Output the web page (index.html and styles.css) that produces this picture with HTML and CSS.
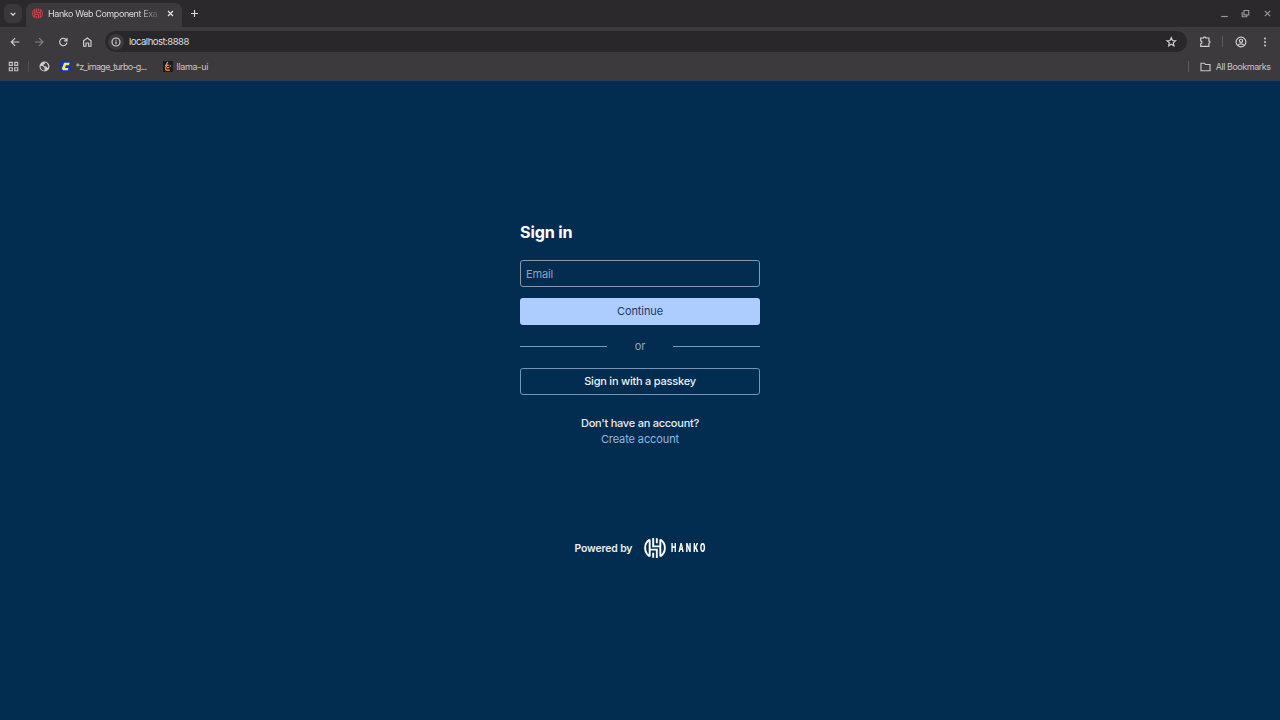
FILE: index.html
```html
<!DOCTYPE html>
<html lang="en">
<head>
<meta charset="utf-8">
<title>Hanko Web Component Example</title>
<link rel="stylesheet" href="styles.css">
</head>
<body>
<svg class="defs" width="0" height="0">
  <symbol id="hanko" viewBox="0 0 24 24">
    <g fill="none" stroke="currentColor" stroke-width="2.1">
      <path d="M6.2 2.8A11 11 0 0 0 6.2 21.2M17.8 2.8A11 11 0 0 1 17.8 21.2M6.2 2.8v18.4M17.8 2.8v18.4M10 1v9.2h7.8M14 23v-9.2H6.2M14 1.4v5.4M10 22.6v-5.4"/>
    </g>
  </symbol>
</svg>
<header class="browser">
  <div class="tabstrip">
    <button class="tab-search"><svg width="8" height="8" viewBox="0 0 8 8"><path d="M1.7 2.8 4 5.1l2.3-2.3"/></svg></button>
    <div class="tab">
      <svg class="favicon" width="11" height="11"><use href="#hanko"/></svg>
      <span class="tab-title">Hanko Web Component Exa</span>
      <svg class="close" width="7" height="7" viewBox="0 0 7 7"><path d="m1 1 5 5M6 1 1 6"/></svg>
    </div>
    <svg class="new-tab" width="9" height="9" viewBox="0 0 9 9"><path d="M4.5 1v7M1 4.5h7"/></svg>
    <div class="window-buttons">
      <svg width="9" height="9" viewBox="0 0 9 9"><path d="M1.2 7.5h6.6"/></svg>
      <svg width="9" height="9" viewBox="0 0 9 9"><path d="M3 1.5h4.7v4.3H3zM1.2 3v4.7h4.5V5.8"/></svg>
      <svg width="9" height="9" viewBox="0 0 9 9"><path d="m1.8 1.8 5.4 5.4M7.2 1.8 1.8 7.2"/></svg>
    </div>
  </div>
  <div class="toolbar">
    <nav class="nav">
      <svg width="12" height="12" viewBox="0 0 12 12"><path d="M10.3 6H2.5M6.1 2.2 2.3 6l3.8 3.8"/></svg>
      <svg class="off" width="12" height="12" viewBox="0 0 12 12"><path d="M2 6h7.8M6.2 2.2 10 6 6.2 9.8"/></svg>
      <svg width="12" height="12" viewBox="0 0 12 12"><path d="M9.6 4.2A3.7 3.7 0 1 0 10 6.7M10 2v2.8H7.1"/></svg>
      <svg width="12" height="12" viewBox="0 0 12 12"><path d="M2.6 10.2V4.8L6.3 2 10 4.8v5.4H7.6V7H5v3.2z"/></svg>
    </nav>
    <div class="omnibox">
      <span class="site-info"><svg width="10" height="10" viewBox="0 0 10 10"><circle cx="5" cy="5" r="4"/><path d="M5 4.5v2.8M5 2.7v1"/></svg></span>
      <span class="url">localhost:8888</span>
      <svg class="star" width="12" height="12" viewBox="0 0 12 12"><path d="m6.3 1.7 1.25 2.8 3.05.3-2.3 2 .7 3-2.7-1.55L3.6 9.8l.7-3L2 4.8l3.05-.3z"/></svg>
    </div>
    <div class="actions">
      <svg width="12" height="12" viewBox="0 0 12 12"><path d="M1.7 2h2.8c0-1.2 2.4-1.2 2.4 0h3v2.9c1.5 0 1.5 2.3 0 2.3v3.1H1.7V7.8c1.7 0 1.7-3 0-3z"/></svg>
      <i class="rule"></i>
      <svg width="12" height="12" viewBox="0 0 12 12"><circle cx="6" cy="6" r="4.9"/><circle cx="6" cy="4.8" r="1.6"/><path d="M2.8 9.3c1.6-1.9 4.8-1.9 6.4 0"/></svg>
      <svg class="dots" width="12" height="12" viewBox="0 0 12 12"><circle cx="6" cy="2.5" r="1"/><circle cx="6" cy="6" r="1"/><circle cx="6" cy="9.5" r="1"/></svg>
    </div>
  </div>
  <div class="bookmarks">
    <svg class="apps" width="11" height="11" viewBox="0 0 11 11"><path d="M1.3 1.3h3v3h-3zM6.7 1.3h3v3h-3zM1.3 6.7h3v3h-3zM6.7 6.7h3v3h-3z"/></svg>
    <i class="rule faint"></i>
    <svg class="globe" width="11" height="11" viewBox="0 0 11 11"><circle cx="5.5" cy="5.5" r="5" fill="#d0ced1"/><path fill="#454247" d="M1.5 5h2.1l1.9 1.8v2.9C3 9.4 1.5 7.5 1.5 5zM5.5 1.5l2.2.4L9.4 5 8.6 7 7 5.4 4.8 5 4.4 3.8 6 3z"/></svg>
    <svg class="comfy" width="11" height="11" viewBox="0 0 11 12"><path fill="#1430dc" d="M0 0h11v12H0z"/><path fill="#eff34e" d="M4 2h6l-.7 2.5H5.8L5 7.5h3.7L8 10H2.8L1.5 8.5z"/></svg>
    <span class="bm-a">*z_image_turbo-g...</span>
    <svg class="llama" width="10" height="11" viewBox="0 0 10 11"><path fill="#1d1b1c" d="M0 0h10v11H0z"/><path class="llama-line" d="M4.7 1 3 4.2h2.7M3.5 4.2 2.7 7c-.4 1.7.5 2.2 1.6 2.2h2.4M4 6.6h2.3M7.4 4.2v1.4"/></svg>
    <span class="bm-b">llama-ui</span>
    <i class="rule last"></i>
    <svg class="folder" width="11" height="10" viewBox="0 0 11 10"><path d="M1 1.2h3.3l1.2 1.3H10v6.2H1z"/></svg>
    <span class="bm-all">All Bookmarks</span>
  </div>
</header>
<main class="page">
  <form class="card">
    <h1>Sign in</h1>
    <input class="field" type="email" placeholder="Email">
    <button class="button primary" type="button">Continue</button>
    <div class="divider"><span>or</span></div>
    <button class="button secondary" type="button">Sign in with a passkey</button>
    <p class="question">Don't have an account?</p>
    <a class="create">Create account</a>
  </form>
  <footer class="powered">
    <span class="powered-text">Powered by</span>
    <svg class="mark" width="22" height="22"><use href="#hanko"/></svg>
    <span class="wordmark">HANKO</span>
  </footer>
</main>
</body>
</html>
```
FILE: styles.css
```css
* { box-sizing: border-box; }
body { margin: 0; height: 720px; overflow: hidden; background: #022d51; font-family: Inter, sans-serif; }
button, input { font: inherit; padding: 0; margin: 0; border: 0; }
svg { display: block; flex: none; }
.defs { position: absolute; }
.browser { height: 81px; background: #3c3a3d; color: #d2d0d3; font-size: 9px; border-bottom: 1px solid #243d52; white-space: nowrap; }
.browser svg { fill: none; stroke: currentColor; stroke-width: 1.15; }
.tabstrip { height: 27px; display: flex; align-items: center; background: #2b292c; padding-left: 4px; }
.tab-search { width: 18px; height: 19px; border-radius: 6px; background: #3a383b; color: #e4e2e5; display: grid; place-items: center; }
.tab { align-self: flex-end; width: 156px; height: 24px; margin-left: 4px; padding: 0 8px 3px 6px; border-radius: 7px 7px 0 0; background: #3c3a3d; display: flex; align-items: center; }
.browser .favicon { color: #e0454d; stroke: none; }
.tab-title { width: 112px; flex: none; margin-left: 5px; color: #dddbde; letter-spacing: -.42px; mask-image: linear-gradient(90deg, #000 80%, transparent 102%); }
.close { margin-left: 7px; color: #e4e2e5; }
.new-tab { margin-left: 8px; color: #d8d6d9; }
.window-buttons { margin-left: auto; padding-right: 8px; display: flex; gap: 12.7px; color: #99979a; }
.toolbar { height: 29px; display: flex; align-items: center; padding-left: 9px; }
.nav { display: flex; gap: 12px; }
.off { color: #858386; }
.omnibox { width: 1082px; height: 21px; margin-left: 12px; padding: 0 10px 0 3px; border-radius: 11px; background: #29272a; display: flex; align-items: center; }
.site-info { width: 16px; height: 16px; border-radius: 50%; background: #3b393c; display: grid; place-items: center; }
.url { margin-left: 5px; font-size: 9.5px; letter-spacing: -.5px; line-height: 14px; color: #dfdde0; }
.star { margin-left: auto; }
.actions { display: flex; align-items: center; margin-left: 12px; }
.rule { width: 1px; height: 11px; background: #5d5b5e; }
.actions .rule { margin: 0 12px 0 11px; }
.browser .dots { margin-left: 12px; fill: currentColor; stroke: none; }
.bookmarks { height: 24px; display: flex; align-items: center; padding: 0 9.5px 3px 8px; font-size: 9px; line-height: 11px; color: #c7c5c8; }
.faint { margin-left: 9px; opacity: .6; }
.browser .globe { margin-left: 9.5px; stroke: none; }
.browser .comfy { margin-left: 10px; stroke: none; }
.bm-a { width: 73px; flex: none; margin-left: 5px; letter-spacing: -.69px; }
.browser .llama { margin-left: 14px; stroke: none; }
.browser .llama-line { stroke: #f48436; stroke-width: 1.4; }
.bm-b { margin-left: 4px; letter-spacing: -.3px; }
.last { margin-left: auto; }
.folder { margin: 0 5px 0 11px; }
.bm-all { letter-spacing: -.48px; }
.page { display: flex; flex-direction: column; align-items: center; padding-top: 142px; }
.card { width: 240px; display: flex; flex-direction: column; font-size: 11px; line-height: 15px; letter-spacing: -.1px; }
h1 { margin: 0 0 20px; font-size: 16.2px; line-height: 18px; font-weight: 700; letter-spacing: -.18px; color: #fff; }
.field { height: 27px; margin-top: -.6px; padding: 1px 5px 0; border: 1px solid #8799ad; border-radius: 3px; background: transparent; letter-spacing: -.15px; }
.field::placeholder { color: #8ea4bd; opacity: 1; }
.button { height: 27px; border-radius: 3px; }
.primary { margin-top: 10.6px; background: #aecdff; color: #163b68; letter-spacing: -.1px; }
.divider { height: 15px; margin: 14px 0; display: flex; align-items: center; justify-content: center; color: #91a7bf; }
.divider::before, .divider::after { content: ""; flex: 1; height: 1px; background: #7f9ab2; }
.divider span { width: 66px; text-align: center; }
.secondary { border: 1px solid #7896b4; background: transparent; color: #edf1f5; font-weight: 500; letter-spacing: -.22px; }
.question { margin: 21px 0 1px; text-align: center; font-weight: 500; letter-spacing: -.25px; color: #e7edf2; }
.create { text-align: center; color: #90b7e6; }
.powered { width: 131px; height: 22px; margin-top: 90px; display: flex; align-items: center; color: #fff; }
.powered-text { width: 69px; font-size: 10.4px; font-weight: 600; letter-spacing: -.12px; color: #e9eef4; white-space: nowrap; }
.wordmark { width: 35px; margin-left: 5px; font: 900 12px/14px Roboto, sans-serif; letter-spacing: 3.2px; transform: scaleX(.64); transform-origin: left; }
```
